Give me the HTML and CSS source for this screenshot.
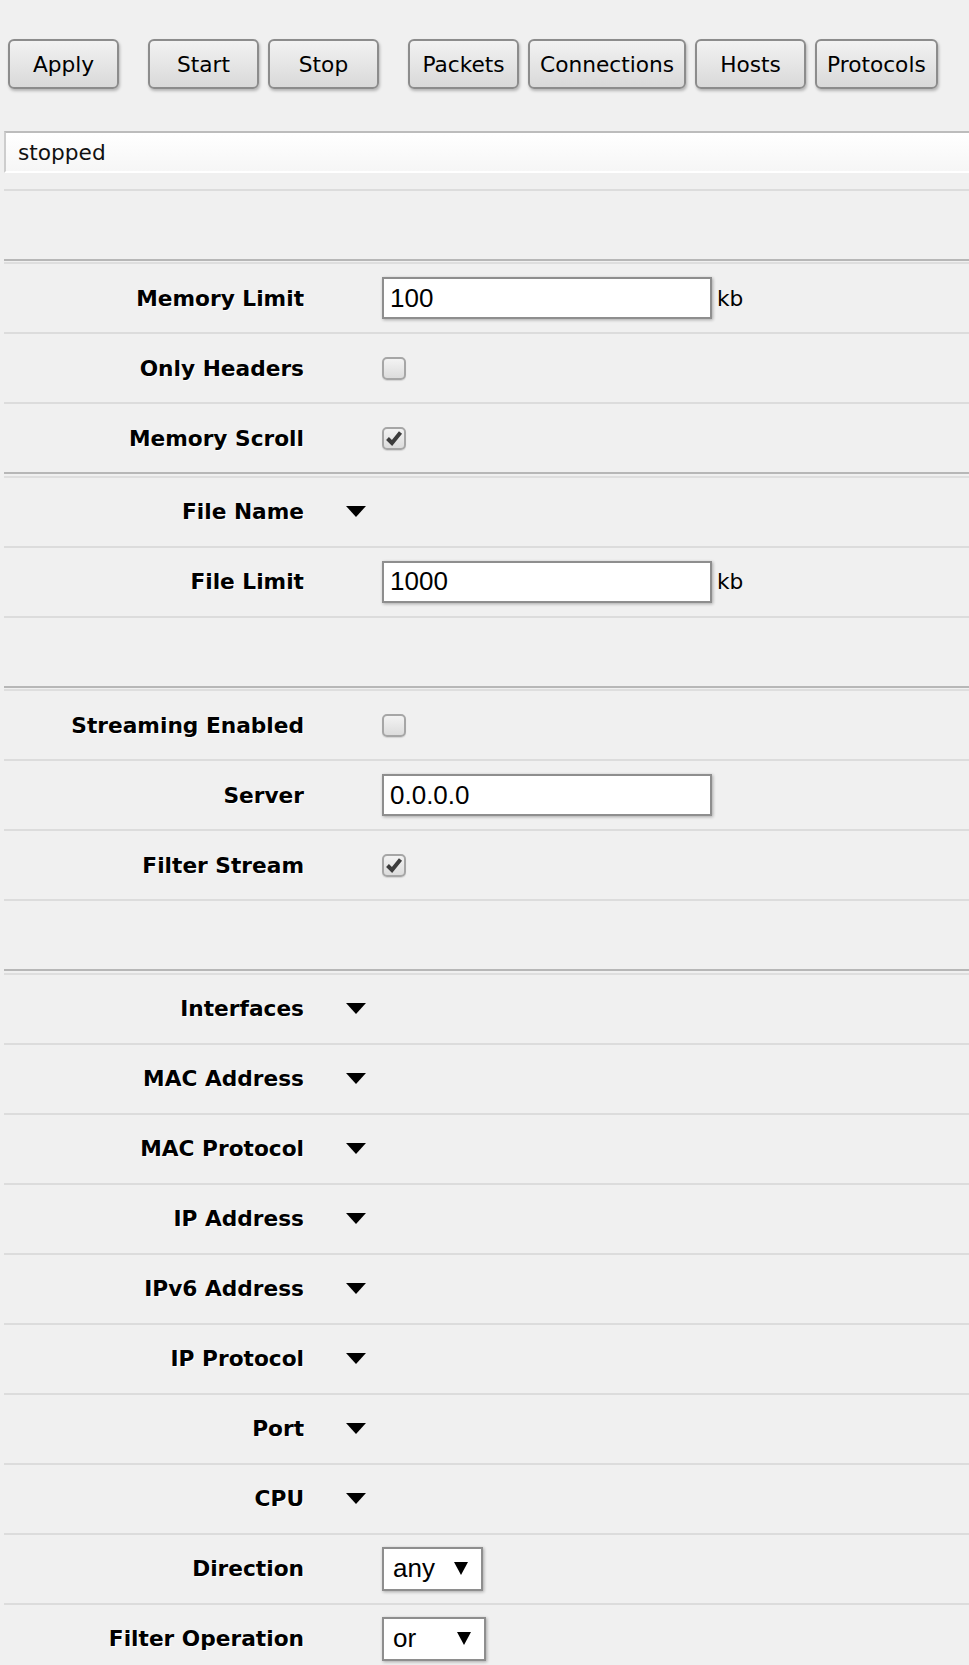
FILE: index.html
```html
<!DOCTYPE html>
<html lang="en">
<head>
    <meta charset="UTF-8">
    <meta name="viewport" content="width=device-width, initial-scale=1.0">
    <title>Packet Sniffer</title>
    <link rel="stylesheet" href="styles.css">
</head>
<body>
    <div class="toolbar">
        <button class="btn">Apply</button>
        <button class="btn btn-gap">Start</button>
        <button class="btn">Stop</button>
        <button class="btn btn-gap">Packets</button>
        <button class="btn">Connections</button>
        <button class="btn">Hosts</button>
        <button class="btn">Protocols</button>
    </div>

    <div class="form">
        <div class="section">
            <div class="status-row">
                <div class="status">stopped</div>
            </div>
            <div class="row"></div>
        </div>

        <div class="section">
            <div class="row">
                <span class="label">Memory Limit</span>
                <span class="toggle"></span>
                <input class="text-input" type="text" value="100">
                <span class="unit">kb</span>
            </div>
            <div class="row">
                <span class="label">Only Headers</span>
                <span class="toggle"></span>
                <span class="checkbox"></span>
            </div>
            <div class="row">
                <span class="label">Memory Scroll</span>
                <span class="toggle"></span>
                <span class="checkbox">
                    <svg width="22" height="22" viewBox="0 0 22 22"><path d="M4.5 11.5 L9 16 L17.5 5.5" fill="none" stroke="#3c3c3c" stroke-width="4"/></svg>
                </span>
            </div>
        </div>

        <div class="section">
            <div class="row">
                <span class="label">File Name</span>
                <span class="toggle"><svg class="arrow" width="20" height="11" viewBox="0 0 20 11"><polygon points="0,0 20,0 10,11"/></svg></span>
            </div>
            <div class="row">
                <span class="label">File Limit</span>
                <span class="toggle"></span>
                <input class="text-input" type="text" value="1000">
                <span class="unit">kb</span>
            </div>
            <div class="row"></div>
        </div>

        <div class="section">
            <div class="row">
                <span class="label">Streaming Enabled</span>
                <span class="toggle"></span>
                <span class="checkbox"></span>
            </div>
            <div class="row">
                <span class="label">Server</span>
                <span class="toggle"></span>
                <input class="text-input" type="text" value="0.0.0.0">
            </div>
            <div class="row">
                <span class="label">Filter Stream</span>
                <span class="toggle"></span>
                <span class="checkbox">
                    <svg width="22" height="22" viewBox="0 0 22 22"><path d="M4.5 11.5 L9 16 L17.5 5.5" fill="none" stroke="#3c3c3c" stroke-width="4"/></svg>
                </span>
            </div>
            <div class="row"></div>
        </div>

        <div class="section">
            <div class="row">
                <span class="label">Interfaces</span>
                <span class="toggle"><svg class="arrow" width="20" height="11" viewBox="0 0 20 11"><polygon points="0,0 20,0 10,11"/></svg></span>
            </div>
            <div class="row">
                <span class="label">MAC Address</span>
                <span class="toggle"><svg class="arrow" width="20" height="11" viewBox="0 0 20 11"><polygon points="0,0 20,0 10,11"/></svg></span>
            </div>
            <div class="row">
                <span class="label">MAC Protocol</span>
                <span class="toggle"><svg class="arrow" width="20" height="11" viewBox="0 0 20 11"><polygon points="0,0 20,0 10,11"/></svg></span>
            </div>
            <div class="row">
                <span class="label">IP Address</span>
                <span class="toggle"><svg class="arrow" width="20" height="11" viewBox="0 0 20 11"><polygon points="0,0 20,0 10,11"/></svg></span>
            </div>
            <div class="row">
                <span class="label">IPv6 Address</span>
                <span class="toggle"><svg class="arrow" width="20" height="11" viewBox="0 0 20 11"><polygon points="0,0 20,0 10,11"/></svg></span>
            </div>
            <div class="row">
                <span class="label">IP Protocol</span>
                <span class="toggle"><svg class="arrow" width="20" height="11" viewBox="0 0 20 11"><polygon points="0,0 20,0 10,11"/></svg></span>
            </div>
            <div class="row">
                <span class="label">Port</span>
                <span class="toggle"><svg class="arrow" width="20" height="11" viewBox="0 0 20 11"><polygon points="0,0 20,0 10,11"/></svg></span>
            </div>
            <div class="row">
                <span class="label">CPU</span>
                <span class="toggle"><svg class="arrow" width="20" height="11" viewBox="0 0 20 11"><polygon points="0,0 20,0 10,11"/></svg></span>
            </div>
            <div class="row">
                <span class="label">Direction</span>
                <span class="toggle"></span>
                <div class="select select-dir">
                    <span>any</span>
                    <svg width="14" height="13" viewBox="0 0 14 13"><polygon points="0,0 14,0 7,13"/></svg>
                </div>
            </div>
            <div class="row">
                <span class="label">Filter Operation</span>
                <span class="toggle"></span>
                <div class="select select-op">
                    <span>or</span>
                    <svg width="14" height="13" viewBox="0 0 14 13"><polygon points="0,0 14,0 7,13"/></svg>
                </div>
            </div>
        </div>
    </div>
</body>
</html>
```

FILE: styles.css
```css
body {
    margin: 0;
    overflow: hidden;
    background: #f0f0f0;
    color: #000;
    font-family: "DejaVu Sans", Verdana, sans-serif;
    font-size: 21.7px;
}

/* top buttons */
.toolbar {
    display: flex;
    gap: 9px;
    padding: 39px 0 0 8px;
}
.btn {
    height: 50px;
    min-width: 111px;
    padding: 0 10px;
    border: 2px solid #8c8c8c;
    border-radius: 6px;
    background: linear-gradient(#f2f2f2, #d9d9d9);
    box-shadow: 1px 2px 3px rgba(0,0,0,0.25);
    font-family: "DejaVu Sans", Verdana, sans-serif;
    font-size: 21.7px;
    color: #000;
}
.btn-gap {
    margin-left: 20px;
}

/* form */
.form {
    margin-left: 4px;
}
.section + .section {
    border-top: 2px solid #b7b7b7;
}
.section + .section::before {
    content: "";
    display: block;
    height: 2px;
    margin-top: 1.4px;
    background: #dedede;
}
.status-row {
    padding: 42px 0 16px 0;
    border-bottom: 2px solid #dcdcdc;
}
.status {
    display: flex;
    align-items: center;
    height: 42px;
    box-sizing: border-box;
    margin-right: -20px;
    padding-left: 12px;
    border-top: 2px solid #bcbcbc;
    border-left: 2px solid #cdcdcd;
    border-bottom: 2px solid #fff;
    background: linear-gradient(#fff, #f6f6f6);
    color: #111;
}
.row {
    display: flex;
    align-items: center;
    height: 68px;
    border-bottom: 2px solid #dcdcdc;
}
.section > .row:last-child {
    border-bottom: none;
}
.label {
    flex-shrink: 0;
    width: 300px;
    text-align: right;
    font-weight: bold;
    text-shadow: 1px 1px 0 #fff;
}
.toggle {
    flex-shrink: 0;
    display: flex;
    align-items: center;
    width: 78px;
    padding-left: 42px;
    box-sizing: border-box;
}
.arrow {
    display: block;
    fill: #000;
}
.text-input {
    width: 330px;
    height: 42px;
    box-sizing: border-box;
    margin: 0;
    padding: 0 6px;
    border: 2px solid #8e8e8e;
    border-radius: 0;
    background: #fff;
    box-shadow: 1px 1px 3px rgba(0,0,0,0.3);
    font-family: "Liberation Sans", Arial, sans-serif;
    font-size: 26px;
    color: #000;
    outline: none;
}
.unit {
    margin-left: 5px;
}
.checkbox {
    display: flex;
    align-items: center;
    justify-content: center;
    width: 24px;
    height: 23px;
    box-sizing: border-box;
    border: 2px solid #a6a6a6;
    border-radius: 5px;
    background: linear-gradient(#f3f3f3, #dcdcdc);
    box-shadow: 0 1px 1px rgba(0,0,0,0.12);
}
.checkbox svg {
    flex-shrink: 0;
}
.select {
    display: flex;
    align-items: center;
    justify-content: space-between;
    height: 44px;
    box-sizing: border-box;
    padding: 0 13px 0 9px;
    border: 2px solid #8e8e8e;
    background: #fff;
    box-shadow: 1px 1px 3px rgba(0,0,0,0.3);
    font-family: "Liberation Sans", Arial, sans-serif;
    font-size: 26px;
}
.select svg {
    fill: #000;
}
.select-dir {
    width: 101px;
}
.select-op {
    width: 104px;
}
```
